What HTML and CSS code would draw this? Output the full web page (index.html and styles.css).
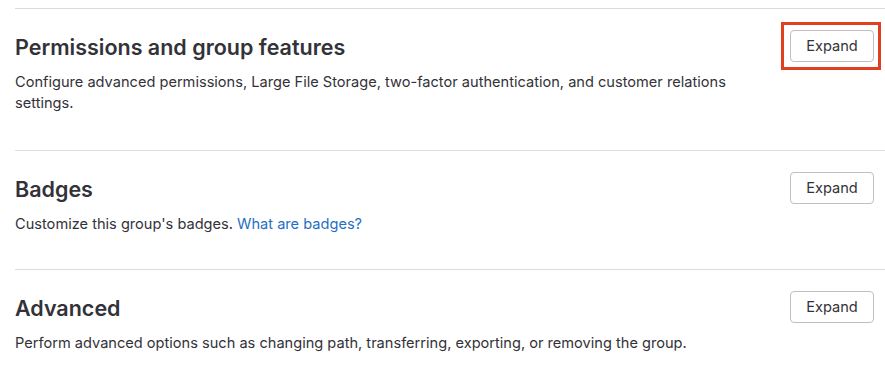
FILE: index.html
```html
<!DOCTYPE html>
<html lang="en">
<head>
<meta charset="UTF-8" />
<meta name="viewport" content="width=device-width, initial-scale=1"/>
<title>Group settings</title>
<link rel="stylesheet" href="styles.css">
</head>
<body>

<div class="settings">
  <!-- Permissions -->
  <section class="settings-section">
    <div class="settings-header">
      <div class="settings-text">
        <h4>Permissions and group features</h4>
        <p>Configure advanced permissions, Large File Storage, two-factor authentication, and customer relations settings.</p>
      </div>
      <div class="highlight">
        <button class="btn">Expand</button>
      </div>
    </div>
  </section>

  <!-- Badges -->
  <section class="settings-section">
    <div class="settings-header">
      <div class="settings-text">
        <h4>Badges</h4>
        <p>Customize this group's badges. <a href="#">What are badges?</a></p>
      </div>
      <button class="btn">Expand</button>
    </div>
  </section>

  <!-- Advanced -->
  <section class="settings-section">
    <div class="settings-header">
      <div class="settings-text">
        <h4>Advanced</h4>
        <p>Perform advanced options such as changing path, transferring, exporting, or removing the group.</p>
      </div>
      <button class="btn">Expand</button>
    </div>
  </section>
</div>

</body>
</html>
```

FILE: styles.css
```css
* {
    margin: 0;
    padding: 0;
    box-sizing: border-box;
}

body {
    font-family: 'Inter', 'Liberation Sans', sans-serif;
    background: #fff;
    color: #333238;
    font-size: 14.6px;
    line-height: 21px;
}

.settings {
    padding: 8px 0 0 15px;
}

/* Секция настроек */
.settings-section {
    border-top: 1px solid #dcdcde;
    padding: 21px 11px 0 0;
}
.settings-section:nth-child(1) {
    padding-bottom: 36px;
}
.settings-section:nth-child(2) {
    padding-bottom: 34px;
}

.settings-header {
    display: flex;
    justify-content: space-between;
    align-items: flex-start;
}

.settings-text {
    max-width: 745px;
}
.settings-text h4 {
    font-size: 21.5px;
    line-height: 24px;
    font-weight: 600;
    margin-top: 5px;
    margin-bottom: 13px;
    color: #333238;
}
.settings-text a {
    color: #1f6fc5;
    text-decoration: none;
}

/* Кнопка */
.btn {
    font-family: inherit;
    font-size: 14.6px;
    color: #333238;
    background: #fff;
    border: 1px solid #bfbfc3;
    border-radius: 4px;
    width: 84px;
    height: 32px;
    cursor: pointer;
}

/* Красная рамка вокруг кнопки */
.highlight {
    border: 3px solid #e0401f;
    padding: 5px 4px 5px 6px;
    margin: -8px -7px 0 0;
    line-height: 0;
}
```
